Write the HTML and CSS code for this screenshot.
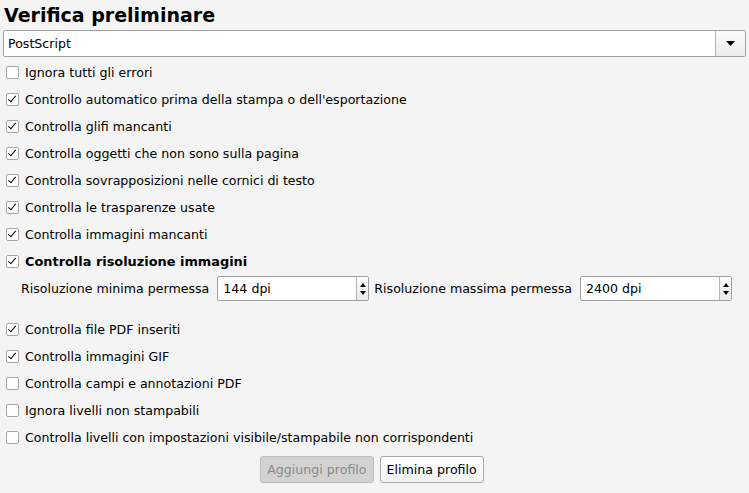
FILE: index.html
```html
<!DOCTYPE html>
<html>
<head>
<meta charset="utf-8">
<link rel="stylesheet" href="styles.css">
</head>
<body>
<div class="page">
  <h1 class="title">Verifica preliminare</h1>
  <div class="combo">
    <span class="combo-text">PostScript</span>
    <span class="combo-btn"><svg width="9" height="5" viewBox="0 0 9 5"><path d="M0 0H9L4.5 5Z" fill="#000"/></svg></span>
  </div>
  <ul class="checks">
    <li class="row"><span class="cb"></span>Ignora tutti gli errori</li>
    <li class="row"><span class="cb on"></span>Controllo automatico prima della stampa o dell'esportazione</li>
    <li class="row"><span class="cb on"></span>Controlla glifi mancanti</li>
    <li class="row"><span class="cb on"></span>Controlla oggetti che non sono sulla pagina</li>
    <li class="row"><span class="cb on"></span>Controlla sovrapposizioni nelle cornici di testo</li>
    <li class="row"><span class="cb on"></span>Controlla le trasparenze usate</li>
    <li class="row"><span class="cb on"></span>Controlla immagini mancanti</li>
    <li class="row bold"><span class="cb on"></span>Controlla risoluzione immagini</li>
  </ul>
  <div class="res">
    <span class="lbl">Risoluzione minima permessa</span>
    <span class="spin"><span class="spin-text">144 dpi</span><span class="spin-btns"><i class="up"></i><i class="down"></i></span></span>
    <span class="lbl">Risoluzione massima permessa</span>
    <span class="spin"><span class="spin-text">2400 dpi</span><span class="spin-btns"><i class="up"></i><i class="down"></i></span></span>
  </div>
  <ul class="checks second">
    <li class="row"><span class="cb on"></span>Controlla file PDF inseriti</li>
    <li class="row"><span class="cb on"></span>Controlla immagini GIF</li>
    <li class="row"><span class="cb"></span>Controlla campi e annotazioni PDF</li>
    <li class="row"><span class="cb"></span>Ignora livelli non stampabili</li>
    <li class="row"><span class="cb"></span>Controlla livelli con impostazioni visibile/stampabile non corrispondenti</li>
  </ul>
  <div class="buttons">
    <button class="btn disabled">Aggiungi profilo</button>
    <button class="btn">Elimina profilo</button>
  </div>
</div>
</body>
</html>
```
FILE: styles.css
```css
html, body {
  margin: 0;
  padding: 0;
  background: #f4f4f4;
}
body {
  font-family: "DejaVu Sans", sans-serif;
  font-size: 12.6px;
  color: #000;
  width: 749px;
  height: 493px;
  overflow: hidden;
}
.page {
  padding: 0 3px 0 3px;
}
.title {
  margin: 0;
  font-size: 19px;
  font-weight: bold;
  line-height: 30px;
  padding-left: 1px;
  height: 30px;
}
.combo {
  display: flex;
  border: 1px solid #a0a0a0;
  border-radius: 2px;
  background: #fff;
  width: 743px;
  box-sizing: border-box;
  height: 27px;
}
.combo-text {
  flex: 1;
  display: flex;
  align-items: center;
  padding-left: 4px;
}
.combo-btn {
  width: 29px;
  border-left: 1px solid #b4b4b4;
  background: linear-gradient(#fbfbfb, #ececec);
  display: flex;
  align-items: center;
  justify-content: center;
}
.checks {
  list-style: none;
  margin: 0;
  padding: 2px 0 0 0;
}
.row {
  display: flex;
  align-items: center;
  height: 27px;
}
.row.bold {
  font-weight: bold;
  font-size: 12.9px;
}
.cb {
  width: 11px;
  height: 11px;
  border: 1px solid #a6a6a6;
  border-radius: 2px;
  background: #fff;
  margin-left: 3px;
  margin-right: 6px;
  position: relative;
  flex: none;
}
.cb.on::after {
  content: "";
  position: absolute;
  left: 3px;
  top: 0px;
  width: 3px;
  height: 7px;
  border-right: 1.6px solid #000;
  border-bottom: 1.6px solid #000;
  transform: rotate(40deg);
}
.res {
  display: flex;
  align-items: center;
  height: 27px;
  padding-left: 18px;
  margin-bottom: 12px;
}
.lbl {
  margin-right: 8px;
}
.spin {
  display: flex;
  width: 152px;
  height: 25px;
  box-sizing: border-box;
  border: 1px solid #a0a0a0;
  border-radius: 2px;
  background: #fff;
  margin-right: 5px;
}
.spin-text {
  flex: 1;
  display: flex;
  align-items: center;
  padding-left: 5px;
}
.spin-btns {
  width: 11px;
  border-left: 1px solid #b4b4b4;
  background: linear-gradient(#fbfbfb, #ececec);
  display: flex;
  flex-direction: column;
  align-items: center;
  justify-content: space-between;
  padding: 6px 0 5px;
}
.spin-btns i {
  width: 0;
  height: 0;
  border-left: 3px solid transparent;
  border-right: 3px solid transparent;
}
.spin-btns .up {
  border-bottom: 4px solid #000;
}
.spin-btns .down {
  border-top: 4px solid #000;
}
.buttons {
  display: flex;
  justify-content: center;
  gap: 6px;
  padding-top: 5px;
  padding-right: 5px;
}
.btn {
  font-family: "DejaVu Sans", sans-serif;
  font-size: 12.6px;
  height: 27px;
  padding: 0 6px;
  border: 1px solid #a8a8a8;
  border-radius: 3px;
  background: linear-gradient(#ffffff, #f2f2f2);
  color: #000;
}
.btn.disabled {
  background: #d2d2d2;
  border-color: #bdbdbd;
  color: #8a8a8a;
}
```
